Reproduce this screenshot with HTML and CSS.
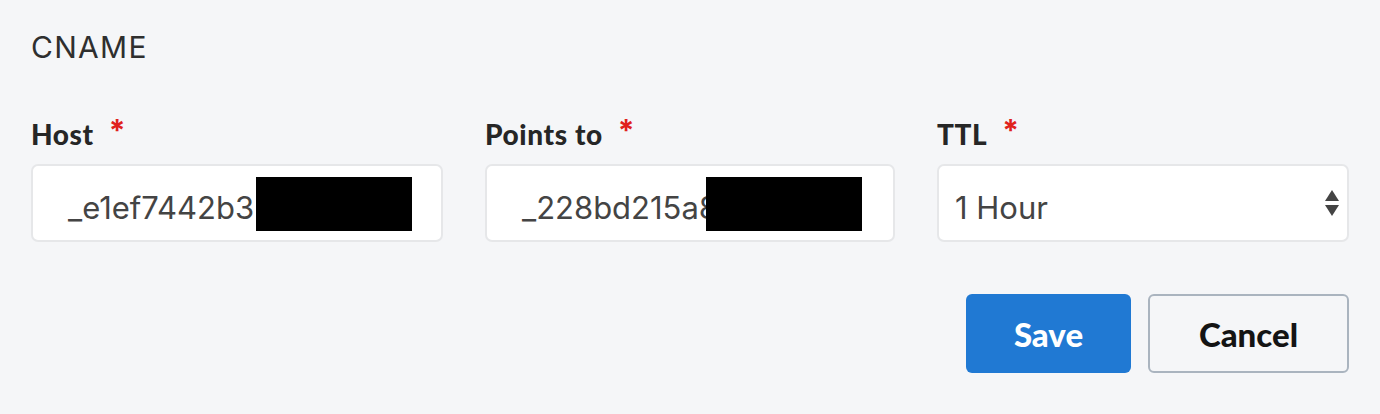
FILE: index.html
```html
<!DOCTYPE html>
<html lang="en">
<head>
<meta charset="utf-8">
<title>CNAME record</title>
<link rel="stylesheet" href="styles.css">
</head>
<body>
<div class="panel">
  <h2 class="title">CNAME</h2>
  <div class="fields">
    <div class="field">
      <label class="label">Host <span class="req">*</span></label>
      <div class="input"><span class="val">_e1ef7442b3</span><span class="redact redact-host"></span></div>
    </div>
    <div class="field">
      <label class="label">Points to <span class="req">*</span></label>
      <div class="input"><span class="val">_228bd215a8</span><span class="redact redact-points"></span></div>
    </div>
    <div class="field">
      <label class="label">TTL <span class="req">*</span></label>
      <div class="select">
        <span class="sel-val">1 Hour</span>
        <svg class="arrows" width="16" height="26" viewBox="0 0 16 26" aria-hidden="true">
          <path d="M8 0 L15 11 L1 11 Z" fill="#444"/>
          <path d="M1 15 L15 15 L8 26 Z" fill="#444"/>
        </svg>
      </div>
    </div>
  </div>
  <div class="actions">
    <button class="btn btn-primary">Save</button>
    <button class="btn btn-secondary">Cancel</button>
  </div>
</div>
</body>
</html>
```

FILE: styles.css
```css
* { box-sizing: border-box; }
html, body { margin: 0; padding: 0; }
body {
  background: #f5f6f8;
  font-family: Inter, "Liberation Sans", Arial, sans-serif;
  color: #333;
  width: 1380px;
  height: 414px;
  overflow: hidden;
}
.panel {
  padding: 27px 31px 0 31px;
}
.title {
  margin: 0;
  font-weight: 400;
  font-size: 30px;
  line-height: 40px;
  letter-spacing: 1.3px;
  color: #2f2f2f;
}
.fields {
  display: grid;
  grid-template-columns: 412px 410px 412px;
  column-gap: 42px;
  margin-top: 49px;
}
.field {
  display: flex;
  flex-direction: column;
}
.label {
  font-family: Lato, "Open Sans", sans-serif;
  font-weight: 900;
  font-size: 28px;
  letter-spacing: 0.6px;
  line-height: 36px;
  color: #262626;
  display: flex;
  align-items: center;
  gap: 15px;
}
.req {
  color: #e0221c;
  font-family: Inter, sans-serif;
  font-weight: 700;
  font-size: 30px;
  margin-top: -8px;
}
.input, .select {
  margin-top: 12px;
  height: 78px;
  background: #fff;
  border: 2px solid #e6e7e9;
  border-radius: 7px;
  display: flex;
  align-items: center;
  font-size: 31px;
  color: #444;
  padding-top: 8px;
}
.input {
  padding-left: 35px;
  position: relative;
  overflow: hidden;
}
.val { white-space: nowrap; }
.redact {
  position: absolute;
  top: 11px;
  width: 156px;
  height: 54px;
  background: #000;
}
.redact-host { left: 223px; }
.redact-points { left: 219px; }
.select {
  padding-right: 7px;
  padding-left: 16px;
  justify-content: space-between;
}
.arrows { display: block; margin-top: -8px; }
.actions {
  display: flex;
  justify-content: flex-end;
  gap: 17px;
  margin-top: 52px;
}
.btn {
  height: 79px;
  border-radius: 6px;
  font-family: Lato, "Open Sans", sans-serif;
  font-weight: 900;
  font-size: 33px;
  padding: 0;
  cursor: pointer;
}
.btn-primary {
  width: 165px;
  background: #2079d3;
  border: none;
  color: #fff;
}
.btn-secondary {
  width: 201px;
  background: transparent;
  border: 2px solid #aab4bf;
  color: #141414;
}
```
